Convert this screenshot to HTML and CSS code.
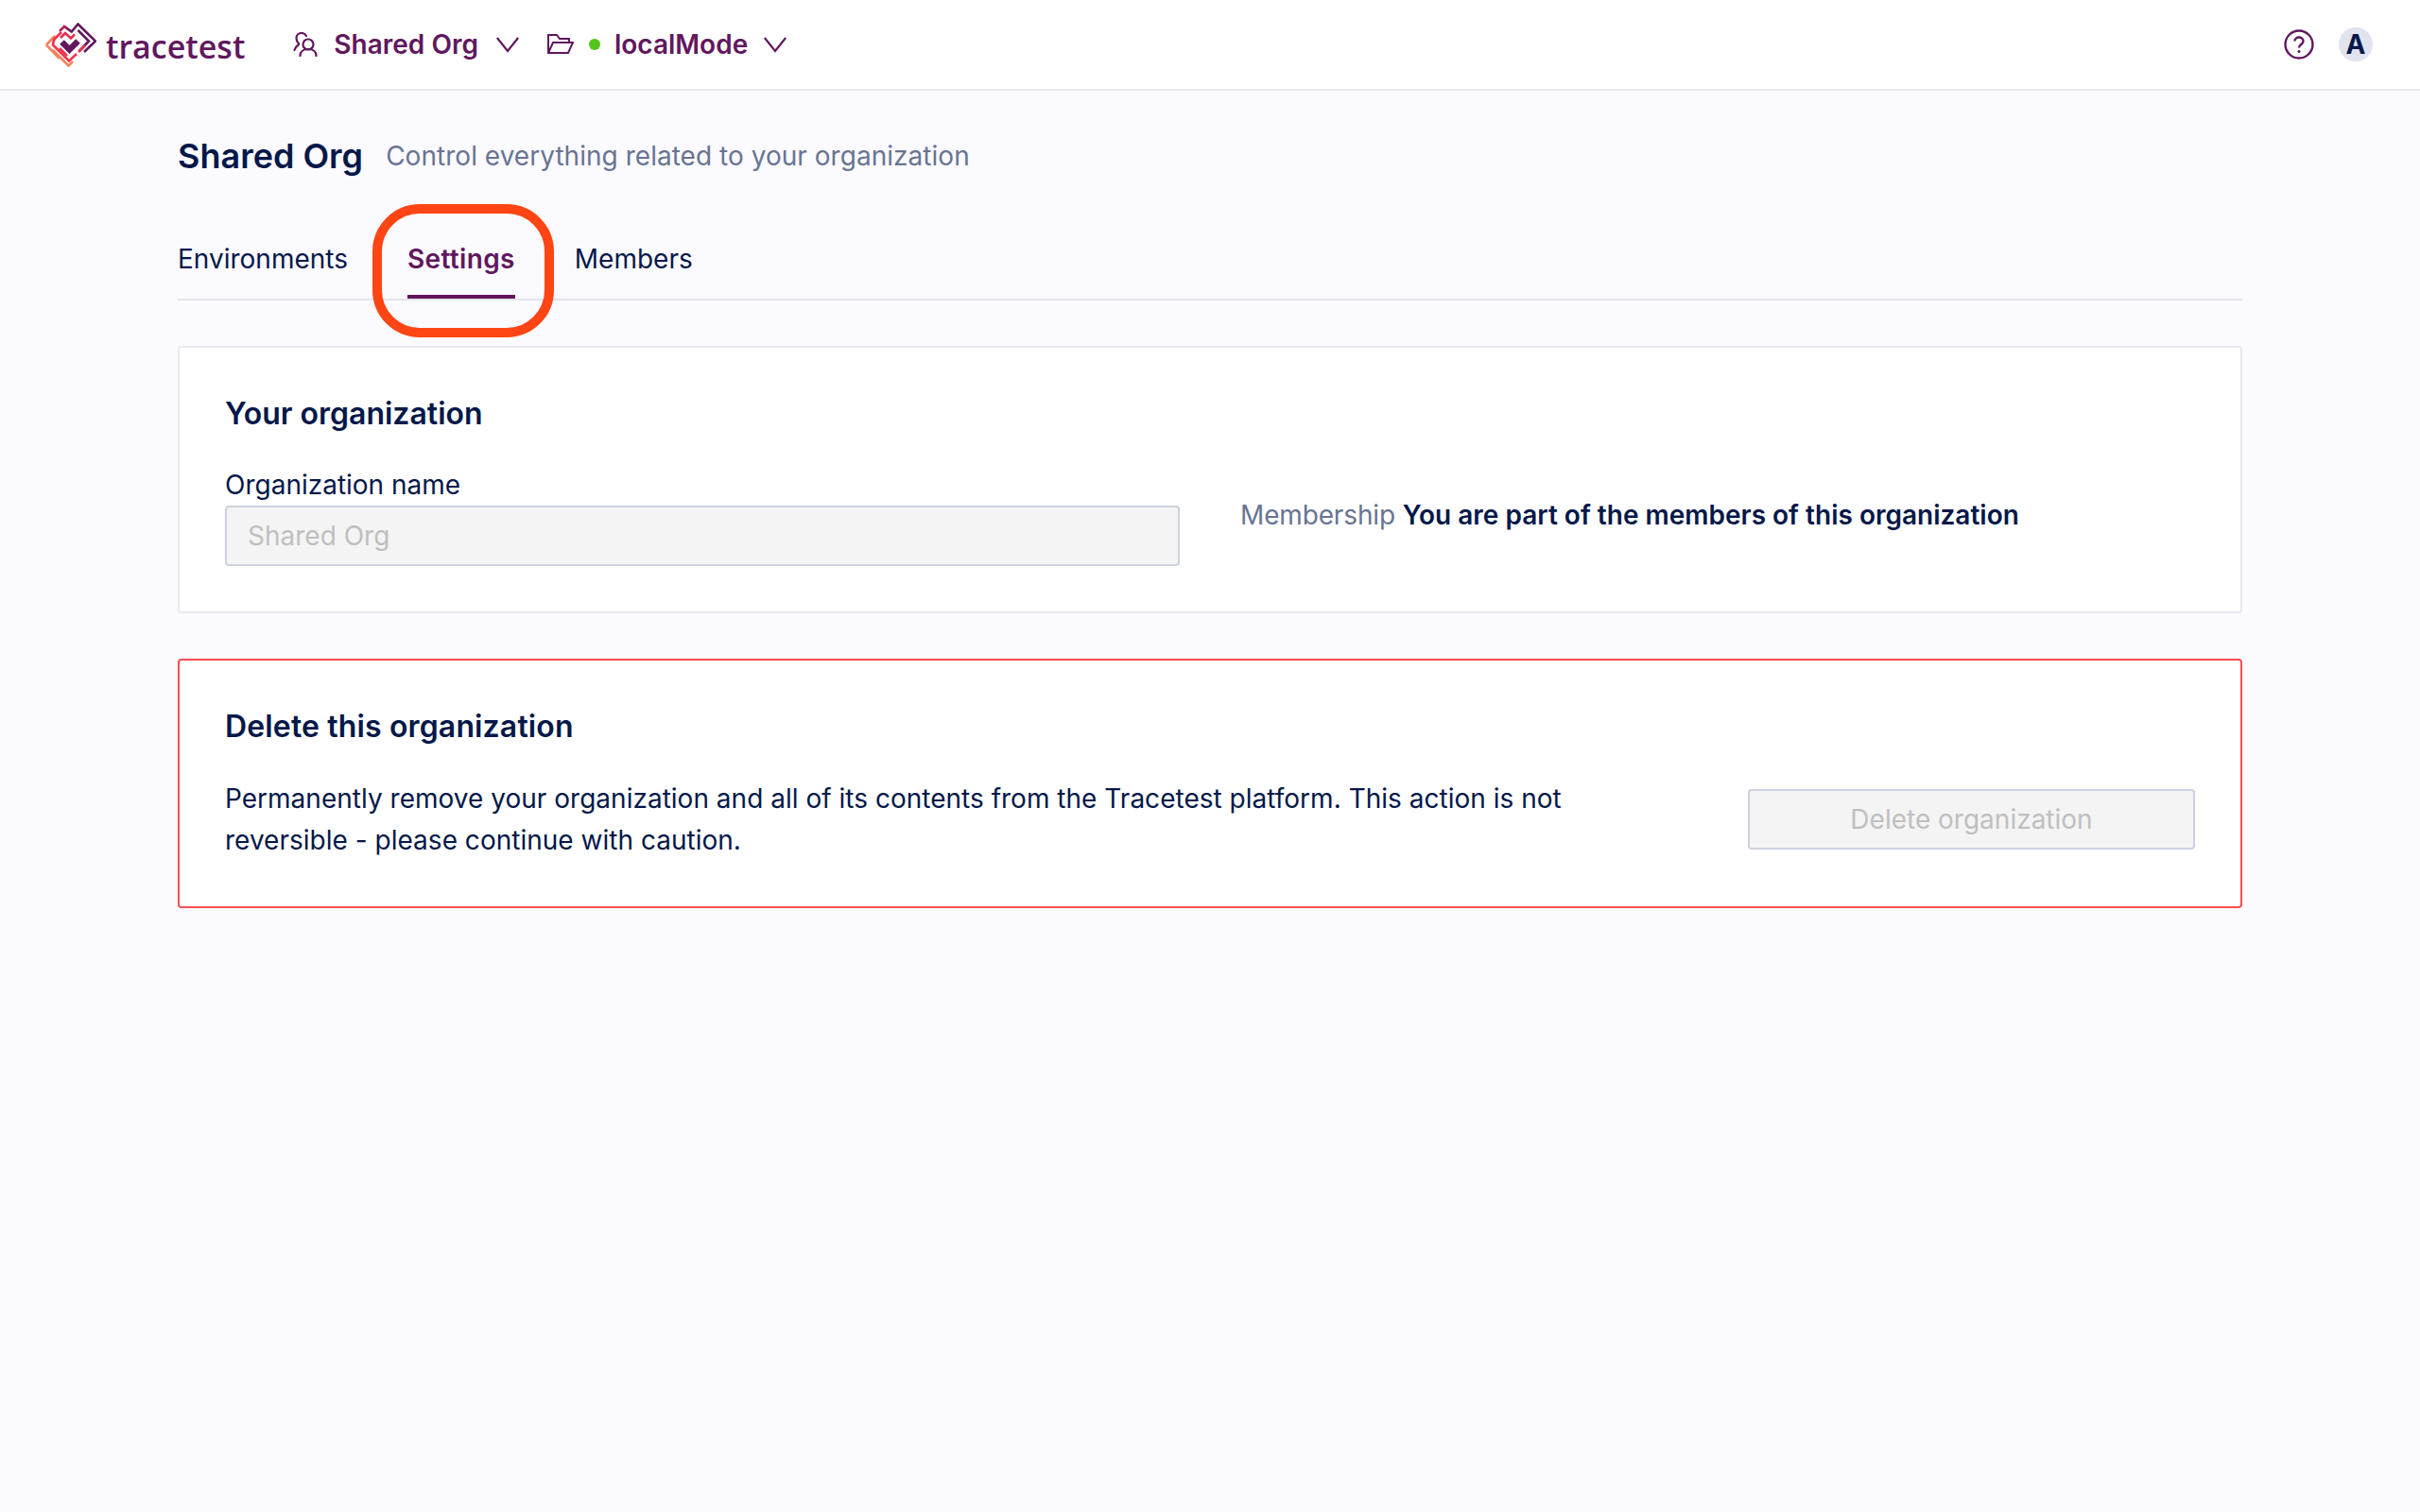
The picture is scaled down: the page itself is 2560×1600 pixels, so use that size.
FILE: index.html
```html
<!DOCTYPE html>
<html lang="en">
<head>
<meta charset="utf-8">
<title>Tracetest - Shared Org</title>
<link rel="stylesheet" href="styles.css">
</head>
<body>
<header class="topbar">
  <div class="topbar-left">
    <a class="logo">
      <svg class="logo-mark" viewBox="0 0 54 47" fill="none" stroke-width="2.600">
        <polyline points="20,4 27.700,9.500 34.500,1.500 53,19.500 41,31" stroke="#61175e"/>
        <polyline points="15,9 20,4 23,6" stroke="#b3244f"/>
        <polyline points="34.500,8 46,19.500 36,30" stroke="#61175e"/>
        <polyline points="1,23.500 10,14" stroke="#f9825b"/>
        <polyline points="1,23.500 15,38" stroke="#f9825b"/>
        <polyline points="8,29 24.500,45.500 29,41" stroke="#f9825b"/>
        <polyline points="17,10 9,18 8,23.500 25,40.500 33,33" stroke="#ef3350"/>
        <polyline points="16,16 21,11 27,16.500 31,12.500" stroke="#e0304f"/>
        <polyline points="35,31 42,24" stroke="#ef3350"/>
        <polyline points="23,35 15,27" stroke="#ef3350"/>
        <polyline points="17.500,20.500 25.500,28.500 34.500,19.500" stroke="#61175e" stroke-width="6.500"/>
      </svg>
      <span class="logo-text">tracetest</span>
    </a>
    <div class="crumb crumb-org">
      <svg class="crumb-icon" viewBox="0 0 26 26" fill="none" stroke="#61175e" stroke-width="2.200" stroke-linecap="round">
        <circle cx="16" cy="13" r="5.500"/>
        <path d="M7.500 25c0-4.500 3.500-7 8.500-7s8.500 2.500 8.500 7"/>
        <path d="M14 4a5.500 5.500 0 0 0-5-3C5.500 1 3.500 3.500 3.500 6.500c0 2.200 1 4 2.500 5.500"/>
        <path d="M1.500 19c.8-2.500 2.500-4.500 4.500-6"/>
      </svg>
      <span class="crumb-label">Shared Org</span>
      <svg class="chevron" viewBox="0 0 24 17" fill="none" stroke="#61175e" stroke-width="2.200"><path d="M.8 1 12 15 23.200 1"/></svg>
    </div>
    <div class="crumb crumb-env">
      <svg class="folder" viewBox="0 0 28 22" fill="none" stroke="#61175e" stroke-width="2"><path d="M1 20V1h9l3 4h10v4M1 20h21l5-11H6z"/></svg>
      <span class="status-dot"></span>
      <span class="crumb-label">localMode</span>
      <svg class="chevron" viewBox="0 0 24 17" fill="none" stroke="#61175e" stroke-width="2.200"><path d="M.8 1 12 15 23.200 1"/></svg>
    </div>
  </div>
  <div class="topbar-right">
    <svg class="help" viewBox="0 0 32 32" fill="none" stroke="#61175e" stroke-width="2.400">
      <circle cx="16" cy="16" r="14.500"/>
      <path d="M11.500 12.500c0-2.500 2-4 4.500-4s4.500 1.700 4.500 4c0 3.500-4.500 3.500-4.500 7"/>
      <circle cx="16" cy="23.500" r="1.500" fill="#61175e" stroke="none"/>
    </svg>
    <span class="avatar">A</span>
  </div>
</header>

<main class="page">
  <div class="page-head">
    <h1 class="page-title">Shared Org</h1>
    <span class="page-sub">Control everything related to your organization</span>
  </div>
  <nav class="tabs">
    <a class="tab">Environments</a>
    <a class="tab tab-active">Settings</a>
    <a class="tab">Members</a>
    <span class="highlight"></span>
  </nav>
  <section class="card">
    <h2 class="card-title">Your organization</h2>
    <div class="org-grid">
      <div class="field">
        <label class="field-label">Organization name</label>
        <div class="input-disabled">Shared Org</div>
      </div>
      <p class="membership"><span class="muted">Membership</span> <strong>You are part of the members of this organization</strong></p>
    </div>
  </section>
  <section class="card card-danger">
    <h2 class="card-title">Delete this organization</h2>
    <div class="danger-row">
      <p class="danger-text">Permanently remove your organization and all of its contents from the Tracetest platform. This action is not reversible - please continue with caution.</p>
      <button class="btn-disabled" disabled>Delete organization</button>
    </div>
  </section>
</main>
</body>
</html>
```
FILE: styles.css
```css
* { box-sizing: border-box; }
html, body { margin: 0; padding: 0; }
body {
  min-height: 1600px;
  background: #fbfaff;
  color: #031849;
  font-family: Inter, "Liberation Sans", sans-serif;
  font-size: 28px;
  line-height: 44px;
}
.topbar {
  height: 96px;
  background: #fff;
  border-bottom: 2px solid #e9e8f0;
  display: flex;
  align-items: center;
  justify-content: space-between;
  padding: 0 48px;
}
.topbar-left, .topbar-right, .logo, .crumb { display: flex; align-items: center; }
.logo-mark { width: 54px; height: 47px; display: block; }
.logo-text {
  margin-left: 10px;
  margin-top: 3px;
  font-family: "Open Sans", sans-serif;
  font-size: 34px;
  font-weight: 600;
  color: #61175e;
  line-height: 44px;
}
.crumb-org { margin-left: 51px; }
.crumb-icon { width: 26px; height: 26px; }
.crumb-label { font-weight: 600; color: #61175e; }
.crumb-org .crumb-label { margin-left: 17px; }
.chevron { width: 24px; height: 17px; margin-left: 18px; margin-top: 1px; }
.crumb-org .chevron { margin-left: 19px; }
.crumb-env { margin-left: 30px; }
.folder { width: 28px; height: 22px; }
.status-dot { width: 12px; height: 12px; border-radius: 50%; background: #52c41a; margin-left: 16px; }
.crumb-env .crumb-label { margin-left: 15px; }
.crumb-env .chevron { margin-left: 17px; }
.topbar-right { gap: 26px; margin-right: 2px; }
.help { width: 32px; height: 32px; }
.avatar {
  width: 36px; height: 36px;
  border-radius: 50%;
  background: #e1e4ef;
  color: #031849;
  font-weight: 700;
  font-size: 28px;
  display: flex; align-items: center; justify-content: center;
}
.page { padding: 0 188px; }
.page-head { display: flex; align-items: center; gap: 24px; height: 124px; padding-top: 14px; }
.page-title { margin: 0; font-size: 36px; font-weight: 600; line-height: 44px; color: #031849; }
.page-sub { color: #687492; letter-spacing: .03px; }
.tabs {
  position: relative;
  display: flex;
  gap: 63px;
  height: 98px;
  border-bottom: 2px solid #e1e4ea;
  margin-bottom: 48px;
}
.tab { padding-top: 32px; height: 96px; }
.tab-active { color: #61175e; font-weight: 600; letter-spacing: .35px; border-bottom: 4px solid #61175e; }
.highlight {
  position: absolute;
  left: 206px; top: -4px;
  width: 192px; height: 141px;
  border: 10px solid #ff4514;
  border-radius: 50px;
}
.card {
  background: #fff;
  border: 2px solid #e9e8f0;
  border-radius: 4px;
  padding: 48px;
  margin-bottom: 48px;
  height: 283px;
}
.card-danger { border-color: #ff4d4f; height: 264px; }
.card-title { margin: 0; font-size: 32px; font-weight: 600; line-height: 44px; color: #031849; }
.card-danger .card-title { letter-spacing: .14px; }
.org-grid { display: grid; grid-template-columns: 1010px 1fr; column-gap: 64px; align-items: center; margin-top: 31px; }
.field { display: flex; flex-direction: column; }
.field-label { line-height: 44px; height: 44px; }
.input-disabled {
  height: 64px;
  background: #f4f4f4;
  border: 2px solid #cdd1de;
  border-radius: 4px;
  color: #bfbfbf;
  padding: 0 22px;
  line-height: 60px;
}
.membership { margin: 0; }
.muted { color: #687492; letter-spacing: -.15px; }
.membership strong { font-weight: 600; }
.danger-row { display: flex; align-items: center; justify-content: space-between; margin-top: 32px; }
.danger-text { margin: 0; width: 1440px; letter-spacing: .015px; }
.btn-disabled {
  width: 473px; height: 64px;
  background: #f4f4f4;
  border: 2px solid #cdd1de;
  border-radius: 4px;
  color: #bfbfbf;
  font: inherit;
}
```
